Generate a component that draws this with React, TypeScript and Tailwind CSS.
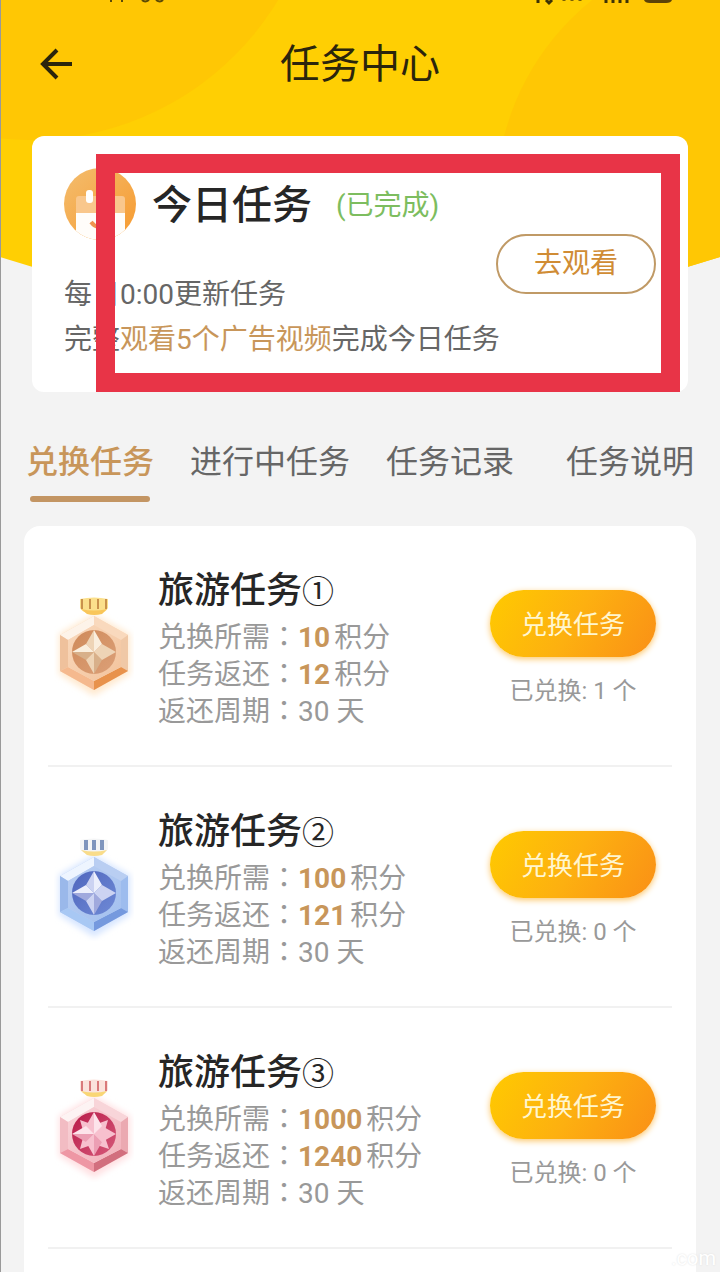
type Tone = 'bronze' | 'silver' | 'ruby';

const tasks: { id: number; title: string; mark: string; cost: number; reward: number; days: number; done: number; tone: Tone }[] = [
  { id: 1, title: '旅游任务', mark: '①', cost: 10, reward: 12, days: 30, done: 1, tone: 'bronze' },
  { id: 2, title: '旅游任务', mark: '②', cost: 100, reward: 121, days: 30, done: 0, tone: 'silver' },
  { id: 3, title: '旅游任务', mark: '③', cost: 1000, reward: 1240, days: 30, done: 0, tone: 'ruby' },
];

const tabs = ['兑换任务', '进行中任务', '任务记录', '任务说明'];

const tones = {
  bronze: {
    rim: '#f9d9bd', rimLight: '#fdf3e9', left: '#efc19c', right: '#f0c8a6', bottomLeft: '#f5b98e', bottomRight: '#e8924c',
    face: '#f3c39c', disc: '#cf8a5a', discEnd: '#dca078', starLight: '#faeedd', starMid: '#eed4b6', starDark: '#d8b08a', glow: '#ffe9cf',
    ribbon: '#fbe08c', stripe: '#c9924c', clasp: '#f9c65a',
  },
  silver: {
    rim: '#b9cef2', rimLight: '#eef5ff', left: '#9ab8ea', right: '#9dbcee', bottomLeft: '#a8c8f4', bottomRight: '#7599de',
    face: '#a3c0ef', disc: '#4f66bd', discEnd: '#6f8ad6', starLight: '#eceffc', starMid: '#ccd3f2', starDark: '#a0a9dd', glow: '#d6e5ff',
    ribbon: '#f4f5f6', stripe: '#7f95bd', clasp: '#f9dc8a',
  },
  ruby: {
    rim: '#f8d5d9', rimLight: '#fdf3f3', left: '#f2bcc3', right: '#eba9b1', bottomLeft: '#ee97a4', bottomRight: '#d26f7e',
    face: '#f2b0ba', disc: '#b81a48', discEnd: '#d65a7a', starLight: '#fde3ea', starMid: '#f7c0ce', starDark: '#ec9fb4', glow: '#ffe0e2',
    ribbon: '#fbe3dc', stripe: '#d97a7a', clasp: '#f9d675',
  },
};

function Medal({ tone }: { tone: Tone }) {
  const c = tones[tone];
  const stripes = tone === 'silver' ? [86, 94, 102] : [82, 90, 98, 106];
  return (
    <svg viewBox="54 12 80 108" className="h-[108px] w-20 shrink-0" aria-hidden="true">
      <defs>
        <filter id={`glow-${tone}`} x="-20%" y="-20%" width="140%" height="140%">
          <feGaussianBlur stdDeviation="3" />
        </filter>
        <linearGradient id={`face-${tone}`} x1="0" y1="0" x2="1" y2="1">
          <stop offset="0" stopColor={c.rim} />
          <stop offset="1" stopColor={c.face} />
        </linearGradient>
        <linearGradient id={`disc-${tone}`} x1="0" y1="0" x2="1" y2="1">
          <stop offset="0" stopColor={c.disc} />
          <stop offset="1" stopColor={c.discEnd} />
        </linearGradient>
      </defs>
      <path d="M94 34 L130 54 V94 L94 116 L59 94 V54Z" fill={c.glow} filter={`url(#glow-${tone})`} />
      <path d="M80 19 Q94 16 108 19 V28 Q106 32 101 33 H88 Q82 32 80 28Z" fill={c.ribbon} />
      {stripes.map((x) => (
        <path key={x} d={`M${x} 19 V29`} stroke={c.stripe} strokeWidth={tone === 'silver' ? 4 : 2} />
      ))}
      <path d="M81 29 Q94 32 107 29 L102 34 Q94 36 87 34Z" fill={c.clasp} />
      <path d="M94 36 L128 55 V91 L94 110 L60 91 V55Z" fill={c.rim} />
      <path d="M94 36 L60 55 L68 60 L94 45Z" fill={c.rimLight} />
      <path d="M94 36 L128 55 L121 60 L94 45Z" fill={c.rim} />
      <path d="M60 55 L68 60 V87 L60 91Z" fill={c.left} />
      <path d="M128 55 L121 60 V87 L128 91Z" fill={c.right} />
      <path d="M60 91 L68 87 L94 101 V110Z" fill={c.bottomLeft} />
      <path d="M128 91 L121 87 L94 101 V110Z" fill={c.bottomRight} />
      <path d="M94 45 L121 60 V87 L94 101 L68 87 V60Z" fill={`url(#face-${tone})`} />
      <circle cx="94" cy="72" r="22" fill={`url(#disc-${tone})`} />
      {tone === 'ruby' && (
        <path d="M80 58 L94 63 L108 58 L104 72 L109 87 L94 82 L80 87 L84 72Z" fill={c.starMid} />
      )}
      <path d="M94 50 L94 72 L86 64Z M116 72 L94 72 L102 64Z" fill={c.starMid} />
      <path d="M94 50 L102 64 L94 72Z M72 72 L86 64 L94 72Z" fill={c.starLight} />
      <path d="M72 72 L94 72 L86 80Z M94 94 L94 72 L102 80Z" fill={c.starDark} />
      <path d="M94 94 L86 80 L94 72Z M116 72 L102 80 L94 72Z" fill={c.starMid} />
    </svg>
  );
}

function Mascot() {
  return (
    <svg viewBox="0 0 72 72" className="size-[72px] shrink-0" aria-hidden="true">
      <defs>
        <linearGradient id="mascot-bg" x1="0" y1="0" x2="1" y2="1">
          <stop offset="0" stopColor="#f3bd6e" />
          <stop offset="1" stopColor="#f79a2f" />
        </linearGradient>
        <clipPath id="mascot-clip">
          <circle cx="36" cy="36" r="36" />
        </clipPath>
      </defs>
      <g clipPath="url(#mascot-clip)">
        <rect width="72" height="72" fill="url(#mascot-bg)" />
        <rect x="12" y="28" width="49" height="44" rx="3" fill="#f9c78c" />
        <rect x="12" y="45" width="49" height="27" fill="#fffdfa" />
        <rect x="22" y="22" width="7" height="13" rx="3" fill="#fff" />
        <rect x="44" y="22" width="7" height="13" rx="3" fill="#fff" />
        <path d="M27 54 Q34 63 42 55" fill="none" stroke="#ef9550" strokeWidth="4" />
      </g>
    </svg>
  );
}

function HeaderBackdrop() {
  return (
    <svg viewBox="0 0 720 290" preserveAspectRatio="none" className="absolute inset-x-0 top-0 h-[290px] w-full" aria-hidden="true">
      <defs>
        <clipPath id="header-clip">
          <path d="M0 0 H720 V257 Q360 372 0 257Z" />
        </clipPath>
      </defs>
      <g clipPath="url(#header-clip)">
        <rect width="720" height="290" fill="#ffcf03" />
        <circle cx="30" cy="-150" r="290" fill="#ffc704" />
        <circle cx="752" cy="200" r="256" fill="#ffc704" />
      </g>
    </svg>
  );
}

// The traditional face centres its full-width colon in the cell
function Colon() {
  return <span className="font-['Noto_Sans_CJK_TC',sans-serif] leading-none" lang="zh-TW">：</span>;
}

export default function App() {
  return (
    <div className="relative flex min-h-screen flex-col overflow-hidden bg-[#f3f3f3] font-['Roboto','Noto_Sans_CJK_SC',sans-serif] text-[#666]">
      <HeaderBackdrop />
      <div className="absolute inset-y-0 left-0 w-px bg-[#999]" />

      {/* Status bar, scrolled almost out of view */}
      <div className="relative flex h-2 justify-between pr-11 pl-[106px]">
        <svg viewBox="0 0 60 8" className="h-2 w-[60px]" aria-hidden="true">
          <path d="M5 0 V2 M16 0 V2 M36 0 Q39 3 43 0 M50 0 Q54 3 57 0" fill="none" stroke="#5c4a05" strokeWidth="2" />
        </svg>
        <svg viewBox="0 0 142 8" className="h-2 w-[142px]" aria-hidden="true">
          <path d="M4 0 V3 M12 0 L15 3 L18 0 M72 0 V3 M79 0 V3 M86 0 V3 M93 0 V3" fill="none" stroke="#3d3205" strokeWidth="3" />
          <path d="M30 0 V1 M38 0 V1 M46 0 V1" stroke="#7a6105" strokeWidth="3" />
          <path d="M110 0 H138 Q137 3 132 3 H116 Q111 3 110 0Z" fill="#5c4208" />
        </svg>
      </div>

      <header className="relative grid h-28 grid-cols-[1fr_auto_1fr] items-center px-9">
        <button type="button" aria-label="返回" className="size-10">
          <svg viewBox="0 0 40 40" className="size-10" fill="none" stroke="#2b250c" strokeWidth="4" aria-hidden="true">
            <path d="M36 20 H7 M21 6 L7 20 L21 34" />
          </svg>
        </button>
        <h1 className="pt-0.5 text-[40px] leading-[48px] font-normal text-[#2b250c]">任务中心</h1>
      </header>

      {/* Today's task */}
      <section className="relative mx-8 mt-4 h-64 rounded-xl bg-white px-8 pt-8">
        <div className="flex items-center">
          <Mascot />
          <h2 className="ml-4 pt-1 text-[40px] leading-[48px] font-medium text-[#262626]">今日任务</h2>
          <span className="ml-6 pt-1 text-[28px] text-[#7dbd5f]">(已完成)</span>
        </div>
        <div className="flex justify-end">
          <button type="button" className="-mt-1.5 h-[60px] w-40 rounded-full border-2 border-[#c09a66] text-[28px] text-[#d08c34]">
            去观看
          </button>
        </div>
        <div className="-mt-6 pt-0.5 text-[28px] leading-[45px]">
          <p>每日0:00更新任务</p>
          <p>
            完整<span className="text-[#c8965a]">观看5个广告视频</span>完成今日任务
          </p>
        </div>
        <div className="pointer-events-none absolute top-[18px] right-2 bottom-0 left-16 border-[19px] border-[#e83447]" />
      </section>

      <nav className="relative mt-11 grid grid-cols-4 text-[32px] leading-[52px]">
        {tabs.map((tab, i) => (
          <a key={tab} href="#" className={i === 0 ? 'flex flex-col items-center font-medium text-[#c8965a]' : 'flex flex-col items-center'}>
            {tab}
            {i === 0 && <span className="mt-2 h-[6px] w-[120px] rounded-full bg-[#c39563]" />}
          </a>
        ))}
      </nav>

      <main className="mx-6 mt-6 flex-1 rounded-t-2xl bg-white px-6">
        {tasks.map((task) => (
          <article key={task.id} className="flex h-[241px] border-b-2 border-[#f1f1f1] pt-[38px]">
            <div className="flex w-[110px] pt-7 pl-[6px]">
              <Medal tone={task.tone} />
            </div>
            <div className="flex-1">
              <h3 className="text-[36px] leading-[54px] font-medium text-[#262626]">
                {task.title}
                <span className="text-[32px] font-normal">{task.mark}</span>
              </h3>
              <div className="text-[28px] leading-[37px] text-[#999]">
                <p>
                  兑换所需<Colon /><b className="mr-1 font-bold text-[#c8965a]">{task.cost}</b>积分
                </p>
                <p>
                  任务返还<Colon /><b className="mr-1 font-bold text-[#c8965a]">{task.reward}</b>积分
                </p>
                <p>
                  返还周期<Colon />{task.days} 天
                </p>
              </div>
            </div>
            <div className="mr-4 flex flex-col items-center pt-[26px]">
              <button type="button" className="h-[67px] w-[166px] rounded-full bg-linear-[120deg,#ffca00,#fdb010_50%,#fa9016] pt-1 text-[26px] text-[#fff6cf] shadow-[0_2px_6px_#fcc76a]">
                兑换任务
              </button>
              <p className="mt-4.5 text-[24px] leading-8 text-[#999]">已兑换: {task.done} 个</p>
            </div>
          </article>
        ))}
      </main>

      <span className="absolute right-1 bottom-0 text-[20px] leading-7 text-white [text-shadow:0_0_2px_#ddd]">.com</span>
    </div>
  );
}
